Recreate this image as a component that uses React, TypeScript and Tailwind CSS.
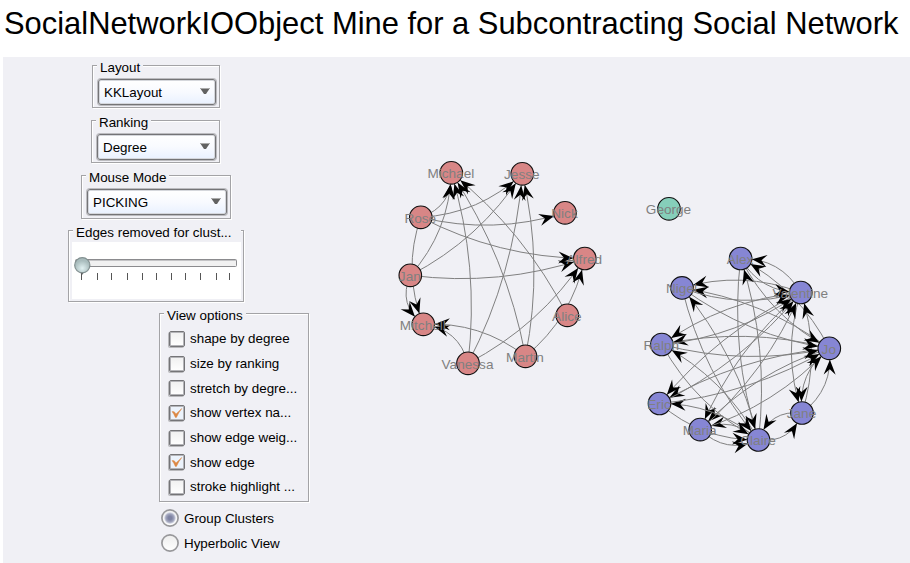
import type { ReactNode } from "react";

type Vertex = { name: string; x: number; y: number; fill: string };

const RED = "#d88686";
const BLUE = "#8686d4";
const GREEN = "#86cfba";
const RADIUS = 11.3;

const vertices: Vertex[] = [
  { name: "Michael", x: 451.3, y: 172.8, fill: RED },
  { name: "Jesse", x: 522.3, y: 173.8, fill: RED },
  { name: "Rose", x: 420.8, y: 217.3, fill: RED },
  { name: "Nick", x: 565, y: 212.8, fill: RED },
  { name: "Alfred", x: 584.8, y: 258.5, fill: RED },
  { name: "Jan", x: 410.3, y: 275.3, fill: RED },
  { name: "Alice", x: 567.3, y: 315.3, fill: RED },
  { name: "Mitchell", x: 423.3, y: 324.3, fill: RED },
  { name: "Martin", x: 525.5, y: 356.3, fill: RED },
  { name: "Vanessa", x: 468, y: 363.3, fill: RED },
  { name: "George", x: 669, y: 208.8, fill: GREEN },
  { name: "Alex", x: 740.6, y: 258.5, fill: BLUE },
  { name: "Nigel", x: 682, y: 287.9, fill: BLUE },
  { name: "Valentine", x: 800.8, y: 292.5, fill: BLUE },
  { name: "Ralph", x: 661.8, y: 344.5, fill: BLUE },
  { name: "Jo", x: 829.3, y: 348.3, fill: BLUE },
  { name: "Eric", x: 659.5, y: 403.5, fill: BLUE },
  { name: "Jane", x: 802, y: 413, fill: BLUE },
  { name: "Maria", x: 700.2, y: 429.6, fill: BLUE },
  { name: "Claire", x: 758.5, y: 440, fill: BLUE },
];

const links: Record<string, string[]> = {
  Rose: ["Michael", "Jesse", "Nick", "Alfred", "Mitchell"],
  Jan: ["Michael", "Jesse", "Alfred", "Mitchell"],
  Vanessa: ["Michael", "Jesse", "Alfred", "Mitchell"],
  Martin: ["Michael", "Jesse", "Alfred", "Mitchell"],
  Alice: ["Michael"],
  Valentine: ["Alex", "Nigel", "Ralph", "Eric", "Maria", "Jane"],
  Jo: ["Alex", "Nigel", "Ralph", "Eric", "Maria", "Jane"],
  Claire: ["Alex", "Nigel", "Ralph", "Eric", "Maria", "Jane"],
  Jane: ["Claire", "Jo", "Valentine"],
  Alex: ["Valentine", "Jo", "Claire"],
  Nigel: ["Valentine", "Jo", "Claire"],
  Ralph: ["Valentine", "Jo", "Claire"],
  Eric: ["Valentine", "Jo", "Claire"],
  Maria: ["Valentine", "Jo", "Claire"],
};

const byName = new Map(vertices.map((v) => [v.name, v]));

// Quadratic edge whose control point sits 20px to the side of the chord.
function edgeGeometry(a: Vertex, b: Vertex) {
  const dx = b.x - a.x;
  const dy = b.y - a.y;
  const len = Math.hypot(dx, dy);
  const cx = (a.x + b.x) / 2 - (dy / len) * 20;
  const cy = (a.y + b.y) / 2 + (dx / len) * 20;
  const at = (t: number) => ({
    x: (1 - t) * (1 - t) * a.x + 2 * t * (1 - t) * cx + t * t * b.x,
    y: (1 - t) * (1 - t) * a.y + 2 * t * (1 - t) * cy + t * t * b.y,
  });
  let t = 1;
  while (t > 0 && Math.hypot(at(t).x - b.x, at(t).y - b.y) < RADIUS) t -= 0.002;
  const tip = at(t);
  const tx = (1 - t) * (cx - a.x) + t * (b.x - cx);
  const ty = (1 - t) * (cy - a.y) + t * (b.y - cy);
  return {
    d: `M${a.x} ${a.y}Q${cx} ${cy} ${b.x} ${b.y}`,
    tip,
    angle: (Math.atan2(ty, tx) * 180) / Math.PI,
  };
}

const edges = Object.entries(links).flatMap(([from, targets]) =>
  targets.map((to) => ({ id: `${from}-${to}`, ...edgeGeometry(byName.get(from)!, byName.get(to)!) })),
);

function Graph() {
  return (
    <svg className="block h-[506px] w-[587px] shrink-0" viewBox="323 57 587 506">
      {edges.map((e) => (
        <g key={e.id}>
          <path d={e.d} fill="none" stroke="#808080" strokeWidth="1" />
          <path
            d="M0 0L-15 -6L-9.5 0L-15 6Z"
            transform={`translate(${e.tip.x} ${e.tip.y}) rotate(${e.angle})`}
          />
        </g>
      ))}
      {vertices.map((v) => (
        <g key={v.name}>
          <circle cx={v.x} cy={v.y} r={RADIUS} fill={v.fill} stroke="#111" strokeWidth="1.1" />
          <text x={v.x - 0.5} y={v.y + 5.2} textAnchor="middle" fontSize="13.6" fill="#808080">
            {v.name}
          </text>
        </g>
      ))}
    </svg>
  );
}

function Group({ title, className, titleClass = "left-[4px]", children }: {
  title: string;
  className: string;
  titleClass?: string;
  children: ReactNode;
}) {
  return (
    <section className={`relative border border-[#a3a3a6] shadow-[1px_1px_0_#fff,inset_1px_1px_0_#fff] ${className}`}>
      <h2 className={`absolute -top-[6px] bg-[#f0f0f5] px-[3px] leading-4 whitespace-nowrap ${titleClass}`}>{title}</h2>
      {children}
    </section>
  );
}

function Combo({ value }: { value: string }) {
  return (
    <div className="flex h-[26px] items-center justify-between rounded-[3px] border border-[#747477] bg-linear-to-b from-white via-[#f8faff] to-[#e9f1ff] pr-[5px] pl-[5px] shadow-[0_0_0_1px_#bcbcc0,inset_0_0_0_1px_#d5d7dc]">
      <span className="pt-[2px]">{value}</span>
      <svg className="mb-[2px] h-[6px] w-[10px]" viewBox="0 0 10 6">
        <path d="M0 0H10L6 6H4Z" fill="#626262" />
        <path d="M0 .5H10" stroke="#aaa" />
      </svg>
    </div>
  );
}

function Check({ label, on = false }: { label: string; on?: boolean }) {
  return (
    <div className="flex h-[24.7px] items-center">
      <span
        className={`mr-[5px] flex size-[16px] shrink-0 items-center justify-center rounded-[2px] border border-[#747477] shadow-[-1px_1px_0_#b9b9bc,inset_0_0_0_1px_#b4b4b8] ${
          on ? "bg-[#ecf3fc]" : "bg-linear-to-b from-[#f0f0f0] to-white"
        }`}
      >
        {on && (
          <svg className="size-3" viewBox="0 0 12 12">
            <path d="M1 4.6L3.2 4.8L5 7L10.8 1.5Q7.6 5.5 5.4 10.4L4.4 10.4Q3 7 1 4.6Z" fill="#dc8844" stroke="#dc8844" strokeWidth=".5" />
          </svg>
        )}
      </span>
      <span className="pt-px whitespace-nowrap">{label}</span>
    </div>
  );
}

function Radio({ label, on = false }: { label: string; on?: boolean }) {
  return (
    <div className="flex h-[25px] items-center gap-[5px]">
      <svg className="mb-px size-[18px]" viewBox="0 0 18 18">
        <defs>
          <radialGradient id="dot">
            <stop offset=".3" stopColor="#7e83a2" />
            <stop offset=".7" stopColor="#a3a7be" />
            <stop offset="1" stopColor="#eceef5" />
          </radialGradient>
          <linearGradient id="ring" x2="0" y2="1">
            <stop stopColor="#ededed" />
            <stop offset="1" stopColor="#fff" />
          </linearGradient>
        </defs>
        <circle cx="9" cy="9" r="8.1" fill="url(#ring)" stroke="#98989b" strokeWidth="1.7" />
        {on && <circle cx="9" cy="9" r="6" fill="url(#dot)" />}
      </svg>
      <span className="pt-[2px]">{label}</span>
    </div>
  );
}

function Slider() {
  const ticks = [9.5, 25, 39, 55, 70, 84, 99, 113, 128.5, 144, 157];
  return (
    <svg className="block h-[57px] w-[169px] bg-white" viewBox="0 0 169 57">
      <defs>
        <radialGradient id="knob" cy=".7">
          <stop stopColor="#e1f1f2" />
          <stop offset="1" stopColor="#a9bcbd" />
        </radialGradient>
      </defs>
      <rect x="3.5" y="17.5" width="161" height="7" rx="1" fill="#f1f1f1" stroke="#8b8b8e" />
      <path d="M4 18.5H164" stroke="#c4c4c6" />
      {ticks.map((x) => (
        <path key={x} d={`M${Math.floor(x) + 0.5} 31V38`} stroke="#555" />
      ))}
      <path d="M7 29H13L10 33Z" fill="#555" />
      <circle cx="10.3" cy="23.2" r="7.6" fill="url(#knob)" stroke="#829091" strokeWidth="1.2" />
    </svg>
  );
}

export default function App() {
  return (
    <div className="h-[563px] w-[910px] overflow-hidden bg-white font-['Liberation_Sans',Arial,sans-serif] text-[13.4px] text-black">
      <h1 className="h-[57px] pt-[6px] pl-[4px] text-[30.9px] leading-[35px] whitespace-nowrap">
        SocialNetworkIOObject Mine for a Subcontracting Social Network
      </h1>
      <main className="ml-[3px] flex h-[506px] bg-[#f0f0f5]">
        <aside className="w-[320px] shrink-0 pt-[8px]">
          <Group title="Layout" className="ml-[89px] h-[43px] w-[128px] pt-[13px] pr-[3px] pl-[5px]">
            <Combo value="KKLayout" />
          </Group>
          <Group title="Ranking" className="mt-[12px] ml-[88px] h-[43px] w-[129px] pt-[13px] pr-[3px] pl-[5px]">
            <Combo value="Degree" />
          </Group>
          <Group title="Mouse Mode" className="mt-[12px] ml-[78px] h-[44px] w-[150px] pt-[13px] pr-[3px] pl-[5px]">
            <Combo value="PICKING" />
          </Group>
          <Group title="Edges removed for clust..." className="mt-[11px] ml-[65px] h-[72px] w-[176px] px-[3px] pt-[11px]" titleClass="left-[4px] w-[168px]">
            <Slider />
          </Group>
          <Group title="View options" className="mt-[11px] ml-[156px] h-[189px] w-[150px] pt-[12.5px] pl-[9px]">
            <Check label="shape by degree" />
            <Check label="size by ranking" />
            <Check label="stretch by degre..." />
            <Check label="show vertex na..." on />
            <Check label="show edge weig..." />
            <Check label="show edge" on />
            <Check label="stroke highlight ..." />
          </Group>
          <div className="mt-[4px] ml-[158px]">
            <Radio label="Group Clusters" on />
            <Radio label="Hyperbolic View" />
          </div>
        </aside>
        <Graph />
      </main>
    </div>
  );
}
